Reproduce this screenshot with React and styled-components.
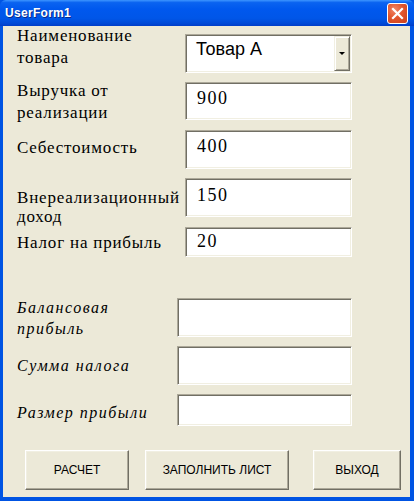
import React from "react";
import styled, { createGlobalStyle } from "styled-components";

const GlobalStyle = createGlobalStyle`
  html, body {
    margin: 0;
    padding: 0;
    background: #ece9d8;
  }
`;

const Window = styled.div`
  width: 414px;
  height: 501px;
  display: flex;
  flex-direction: column;
  box-sizing: border-box;
  background: #0054e3;
`;

const TitleBar = styled.div`
  height: 26px;
  flex: none;
  display: flex;
  align-items: center;
  justify-content: space-between;
  padding: 0 5px 0 5px;
  background: linear-gradient(
    to bottom,
    #3d95ff 0%,
    #0a63f0 10%,
    #0058ee 35%,
    #0056e8 70%,
    #0049d6 90%,
    #003dc8 100%
  );
  border-radius: 6px 6px 0 0;
`;

const Title = styled.span`
  color: #fff;
  font-family: "Liberation Sans", Arial, sans-serif;
  font-weight: bold;
  font-size: 12px;
  letter-spacing: 0.3px;
  text-shadow: 1px 1px 0 #0a2a8a;
  margin-top: -1px;
`;

const CloseButton = styled.div`
  width: 19px;
  height: 19px;
  border: 1px solid #fff;
  border-radius: 3px;
  background: radial-gradient(circle at 35% 30%, #f0886a 0%, #e2562d 45%, #c9401c 100%);
  display: flex;
  align-items: center;
  justify-content: center;
  margin-right: 1px;
`;

const Client = styled.div`
  flex: 1;
  display: flex;
  flex-direction: column;
  background: #ece9d8;
  margin: 0 4px 4px 3px;
`;

const Row = styled.div`
  display: flex;
  align-items: flex-start;
  height: ${(p) => p.$h}px;
  margin-top: ${(p) => p.$gap}px;
  padding-left: 14px;
`;

const Label = styled.div`
  width: ${(p) => p.$w}px;
  flex: none;
  margin-top: ${(p) => p.$mt}px;
  font-family: "Liberation Serif", "Times New Roman", serif;
  font-size: ${(p) => (p.$italic ? 16 : 17)}px;
  font-style: ${(p) => (p.$italic ? "italic" : "normal")};
  letter-spacing: ${(p) => (p.$italic ? 1.5 : 0.8)}px;
  line-height: ${(p) => p.$lh || 22}px;
  color: #000;
  white-space: nowrap;
`;

const Field = styled.div`
  width: ${(p) => p.$w}px;
  height: 100%;
  box-sizing: border-box;
  background: #fff;
  border: 1px solid;
  border-color: #aca899 #fff #fff #aca899;
  box-shadow: inset 1px 1px 0 #716f64, inset -1px -1px 0 #f1efe2;
  padding: ${(p) => p.$pt || 5}px 0 0 11px;
  font-family: "Liberation Serif", "Times New Roman", serif;
  font-size: 18px;
  letter-spacing: 1.5px;
  line-height: normal;
  color: #000;
`;

const Combo = styled.div`
  width: 167px;
  height: 100%;
  box-sizing: border-box;
  display: flex;
  background: #fff;
  border: 1px solid;
  border-color: #aca899 #fff #fff #aca899;
  box-shadow: inset 1px 1px 0 #716f64, inset -1px -1px 0 #f1efe2;
  padding: 1px;
`;

const ComboText = styled.div`
  flex: 1;
  padding: 3px 0 0 9px;
  font-family: "Liberation Sans", Arial, sans-serif;
  font-size: 18px;
  line-height: normal;
  color: #000;
`;

const DropButton = styled.div`
  width: 16px;
  box-sizing: border-box;
  background: #ece9d8;
  border: 1px solid;
  border-color: #f1efe2 #716f64 #716f64 #f1efe2;
  box-shadow: inset 1px 1px 0 #fff, inset -1px -1px 0 #aca899;
  display: flex;
  align-items: center;
  justify-content: center;
`;

const Arrow = styled.span`
  width: 0;
  height: 0;
  border-left: 3px solid transparent;
  border-right: 3px solid transparent;
  border-top: 3px solid #000;
`;

const ButtonBar = styled.div`
  display: flex;
  margin-top: 24px;
  padding-left: 22px;
  height: 40px;
`;

const Button = styled.div`
  width: ${(p) => p.$w}px;
  margin-left: ${(p) => p.$ml || 0}px;
  height: 100%;
  box-sizing: border-box;
  background: #ece9d8;
  border: 1px solid;
  border-color: #fff #716f64 #716f64 #fff;
  box-shadow: inset -1px -1px 0 #aca899, inset 1px 1px 0 #f1efe2;
  display: flex;
  align-items: center;
  justify-content: center;
  font-family: "Liberation Sans Narrow", "Liberation Sans", Arial, sans-serif;
  font-size: 12px;
  color: #000;
`;

const upper = [
  { label: ["Наименование", "товара"], h: 39, gap: 8, mt: -9, combo: "Товар А" },
  { label: ["Выручка от", "реализации"], h: 38, gap: 9, mt: -2, value: "900" },
  { label: ["Себестоимость"], h: 39, gap: 10, mt: 7, value: "400" },
  { label: ["Внереализационный", "доход"], h: 39, gap: 9, mt: 10, lh: 19, value: "150", pt: 6 },
  { label: ["Налог на прибыль"], h: 30, gap: 10, mt: 5, value: "20", pt: 3 },
];

const lower = [
  { label: ["Балансовая", "прибыль"], h: 39, gap: 41, mt: -1, lh: 21 },
  { label: ["Сумма налога"], h: 39, gap: 9, mt: 9, lh: 21 },
  { label: ["Размер прибыли"], h: 32, gap: 9, mt: 8, lh: 21 },
];

const LabelText = ({ lines }) =>
  lines.map((l, i) => (
    <React.Fragment key={i}>
      {i > 0 && <br />}
      {l}
    </React.Fragment>
  ));

export default function App() {
  return (
    <>
      <GlobalStyle />
      <Window>
        <TitleBar>
          <Title>UserForm1</Title>
          <CloseButton>
            <svg width="13" height="13" viewBox="0 0 13 13">
              <path d="M2 2 L11 11 M11 2 L2 11" stroke="#fff" strokeWidth="2.2" strokeLinecap="square" />
            </svg>
          </CloseButton>
        </TitleBar>
        <Client>
          {upper.map((r, i) => (
            <Row key={i} $h={r.h} $gap={r.gap}>
              <Label $w={168} $mt={r.mt} $lh={r.lh}>
                <LabelText lines={r.label} />
              </Label>
              {r.combo ? (
                <Combo>
                  <ComboText>{r.combo}</ComboText>
                  <DropButton>
                    <Arrow />
                  </DropButton>
                </Combo>
              ) : (
                <Field $w={167} $pt={r.pt}>
                  {r.value}
                </Field>
              )}
            </Row>
          ))}
          {lower.map((r, i) => (
            <Row key={i} $h={r.h} $gap={r.gap}>
              <Label $w={160} $mt={r.mt} $lh={r.lh} $italic>
                <LabelText lines={r.label} />
              </Label>
              <Field $w={175} />
            </Row>
          ))}
          <ButtonBar>
            <Button $w={104}>РАСЧЕТ</Button>
            <Button $w={144} $ml={16}>ЗАПОЛНИТЬ ЛИСТ</Button>
            <Button $w={88} $ml={24}>ВЫХОД</Button>
          </ButtonBar>
        </Client>
      </Window>
    </>
  );
}
